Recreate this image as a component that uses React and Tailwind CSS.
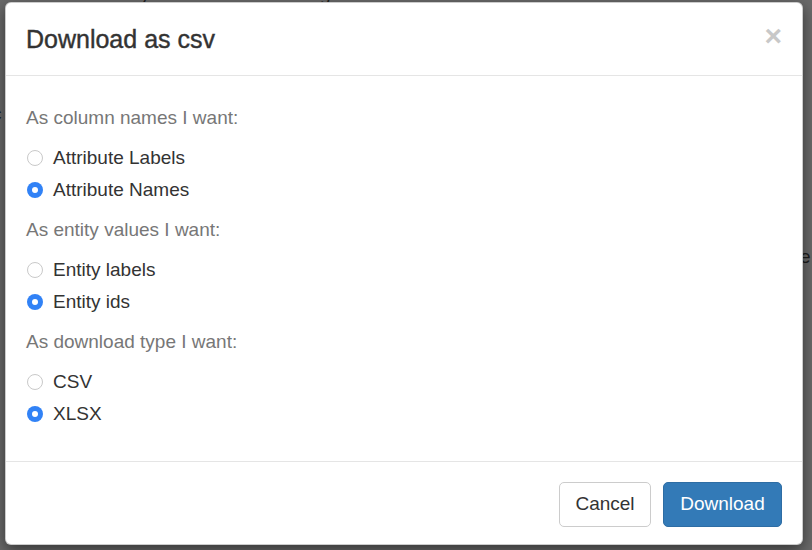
import React from "react";

function Radio({ checked, label }) {
  return (
    <label className="flex h-[32px] items-center">
      {checked ? (
        <span className="ml-[21px] flex h-[16px] w-[16px] items-center justify-center rounded-full bg-[#3182f6]">
          <span className="h-[6px] w-[6px] rounded-full bg-white" />
        </span>
      ) : (
        <span className="ml-[21px] h-[16px] w-[16px] rounded-full border border-[#c9c9c9] bg-white" />
      )}
      <span className="ml-[10px] text-[19px] leading-[24px] text-[#333]">{label}</span>
    </label>
  );
}

function Group({ title, options, first }) {
  return (
    <div className={first ? "" : "mt-[12px]"}>
      <div className="h-[24px] pl-[20px] text-[19px] leading-[24px] text-[#777]">{title}</div>
      <div className="mt-[12px]">
        {options.map((o) => (
          <Radio key={o.label} {...o} />
        ))}
      </div>
    </div>
  );
}

export default function App() {
  return (
    <div
      className="relative h-[550px] w-[812px] overflow-hidden bg-[#6a6a6a]"
      style={{ fontFamily: '"Liberation Sans", Arial, sans-serif' }}
    >
      {/* page behind the backdrop */}
      <div className="-mt-[15px] flex h-[18px] items-end text-[19px] leading-[18px] text-[#1e1e1e]">
        <span className="ml-[62px]">Search System</span>
        <span className="ml-[52px]">Data Integration</span>
        <span className="ml-[55px]">Admin</span>
        <span className="ml-[52px]">Account</span>
      </div>
      <div className="absolute left-[-8px] top-[100px] text-[19px] text-[#1e1e1e]">c</div>
      <div className="absolute left-[800px] top-[243px] text-[19px] text-[#1e1e1e]">e</div>

      {/* modal */}
      <div className="absolute left-[5px] top-[2px] w-[798px] rounded-[6px] border border-black/20 bg-white shadow-[0_5px_15px_rgba(0,0,0,0.5)]">
        <div className="flex h-[73px] items-center justify-between border-b border-[#e5e5e5] pl-[20px] pr-[20px]">
          <h4 className="text-[25px] font-medium leading-[30px] text-[#333] [-webkit-text-stroke:0.4px_#333]">
            Download as csv
          </h4>
          <span className="-mt-[7px] text-[30px] font-bold leading-[30px] text-[#c8c8c8]">×</span>
        </div>
        <div className="pb-[31px] pt-[30px]">
          <Group
            first
            title="As column names I want:"
            options={[
              { label: "Attribute Labels", checked: false },
              { label: "Attribute Names", checked: true },
            ]}
          />
          <Group
            title="As entity values I want:"
            options={[
              { label: "Entity labels", checked: false },
              { label: "Entity ids", checked: true },
            ]}
          />
          <Group
            title="As download type I want:"
            options={[
              { label: "CSV", checked: false },
              { label: "XLSX", checked: true },
            ]}
          />
        </div>
        <div className="flex justify-end gap-[12px] border-t border-[#e5e5e5] pb-[17px] pr-[20px] pt-[20px]">
          <button className="h-[45px] w-[92px] rounded-[5px] border border-[#ccc] bg-white text-[19px] text-[#333]">
            Cancel
          </button>
          <button className="h-[45px] w-[119px] rounded-[5px] border border-[#2e6da4] bg-[#337ab7] text-[19px] text-white">
            Download
          </button>
        </div>
      </div>
    </div>
  );
}
